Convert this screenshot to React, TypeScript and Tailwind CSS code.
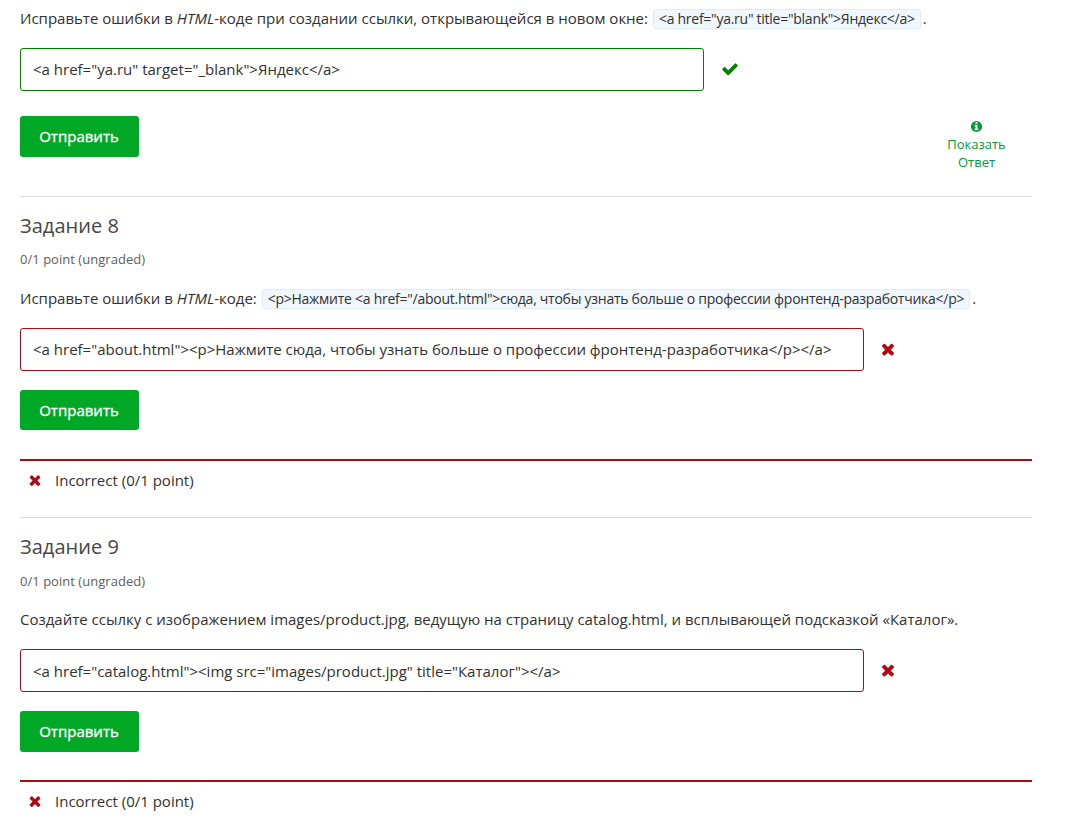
import type { ReactNode } from "react";

const CHECK =
  "M1671 566q0 40-28 68l-724 724-136 136q-28 28-68 28t-68-28l-136-136-362-362q-28-28-28-68t28-68l136-136q28-28 68-28t68 28l294 295 656-657q28-28 68-28t68 28l136 136q28 28 28 68z";
const TIMES =
  "M1490 1322q0 40-28 68l-136 136q-28 28-68 28t-68-28l-294-294-294 294q-28 28-68 28t-68-28l-136-136q-28-28-28-68t28-68l294-294-294-294q-28-28-28-68t28-68l136-136q28-28 68-28t68 28l294 294 294-294q28-28 68-28t68 28l136 136q28 28 28 68t-28 68l-294 294 294 294q28 28 28 68z";
const INFO =
  "M1152 1376v-160q0-14-9-23t-23-9h-96v-512q0-14-9-23t-23-9h-320q-14 0-23 9t-9 23v160q0 14 9 23t23 9h96v320h-96q-14 0-23 9t-9 23v160q0 14 9 23t23 9h448q14 0 23-9t9-23zm-128-896v-160q0-14-9-23t-23-9h-192q-14 0-23 9t-9 23v160q0 14 9 23t23 9h192q14 0 23-9t9-23zm640 416q0 209-103 385.5t-279.5 279.5-385.5 103-385.5-103-279.5-279.5-103-385.5 103-385.5 279.5-279.5 385.5-103 385.5 103 279.5 279.5 103 385.5z";

function Icon({ path, className }: { path: string; className: string }) {
  return (
    <svg viewBox="0 0 1792 1792" fill="currentColor" aria-hidden="true" className={className}>
      <path d={path} />
    </svg>
  );
}

function Code({ children }: { children: ReactNode }) {
  return (
    <code className="-mr-[2px] ml-px inline-block h-5 rounded-[3px] border border-[#e0eaf1] bg-[#f0f7fd] px-[5px] font-['Open_Sans',sans-serif] text-[14px] leading-[18px] tracking-[-0.26px]">
      {children}
    </code>
  );
}

function Prompt({ children }: { children: ReactNode }) {
  return <p className="h-5 whitespace-nowrap text-[15px] leading-5">{children}</p>;
}

function Submit({ className }: { className: string }) {
  return (
    <button
      className={`block w-[119px] rounded-[3px] bg-[#00a826] pr-px text-[15px] text-white [-webkit-text-stroke:0.3px_white] ${className}`}
    >
      Отправить
    </button>
  );
}

function Answer({ value, correct = false, inset = "" }: { value: string; correct?: boolean; inset?: string }) {
  return (
    <div className="mt-5 flex h-[43px] items-center">
      <div
        className={`flex h-full items-center whitespace-nowrap rounded-[3px] border pl-3 text-[15px] ${inset} ${
          correct ? "w-[684px] border-[#008100]" : "w-[844px] border-[#a80c16]"
        }`}
      >
        {value}
      </div>
      {correct ? (
        <Icon path={CHECK} className="mb-[2px] ml-[17px] size-[18px] text-[#008100]" />
      ) : (
        <Icon path={TIMES} className="mb-[2px] ml-[15px] size-[18px] text-[#b20610]" />
      )}
    </div>
  );
}

function Heading({ title, gap }: { title: string; gap: string }) {
  return (
    <>
      <h3 className="text-[20px] leading-6 tracking-[0.05px] text-[#474747]">{title}</h3>
      <div className={`h-[18px] text-[13px] leading-[18px] tracking-[0.03px] text-[#5e5e5e] ${gap}`}>0/1 point (ungraded)</div>
    </>
  );
}

function Incorrect() {
  return (
    <div className="flex h-[41px] items-center border-t-2 border-[#a80c16] pl-[7px] text-[15px]">
      <Icon path={TIMES} className="mb-px size-4 text-[#b20610]" />
      <span className="ml-3">Incorrect (0/1 point)</span>
    </div>
  );
}

export default function App() {
  return (
    <main className="h-[832px] w-[1090px] overflow-hidden bg-white pl-5 pr-[58px] pt-2 font-['Open_Sans',sans-serif] text-[#313131]">
      <section className="h-[189px] border-b border-[#ddd]">
        <Prompt>
          Исправьте ошибки в <em>HTML</em>-коде при создании ссылки, открывающейся в новом окне:{" "}
          <Code>{'<a href="ya.ru" title="blank">Яндекс</a>'}</Code> .
        </Prompt>
        <Answer correct value={'<a href="ya.ru" target="_blank">Яндекс</a>'} />
        <div className="mt-[25px] flex justify-between">
          <Submit className="h-[41px]" />
          <button className="mr-[18px] mt-1 flex w-[75px] flex-col items-center text-[13px] leading-[18px] text-[#009b3a]">
            <Icon path={INFO} className="mb-[2px] size-[13px]" />
            <span>Показать</span>
            <span>Ответ</span>
          </button>
        </div>
      </section>

      <section className="h-[321px] border-b border-[#ddd] pt-[17px]">
        <Heading title="Задание 8" gap="mt-3" />
        <div className="mt-[20px]">
          <Prompt>
            Исправьте ошибки в <em>HTML</em>-коде:{" "}
            <Code>{'<p>Нажмите <a href="/about.html">сюда, чтобы узнать больше о профессии фронтенд-разработчика</p>'}</Code>{" "}
            .
          </Prompt>
        </div>
        <Answer value={'<a href="about.html"><p>Нажмите сюда, чтобы узнать больше о профессии фронтенд-разработчика</p></a>'} />
        <Submit className="mb-[29px] mt-[19px] h-10" />
        <Incorrect />
      </section>

      <section className="pt-[17px]">
        <Heading title="Задание 9" gap="mt-[13px]" />
        <div className="mt-[19px]">
          <Prompt>
            Создайте ссылку с изображением images/product.jpg, ведущую на страницу catalog.html, и всплывающей подсказкой
            «Каталог».
          </Prompt>
        </div>
        <Answer inset="pt-[2px]" value={'<a href="catalog.html"><img src="images/product.jpg" title="Каталог"></a>'} />
        <Submit className="mb-[28px] mt-[19px] h-[41px]" />
        <Incorrect />
      </section>
    </main>
  );
}
